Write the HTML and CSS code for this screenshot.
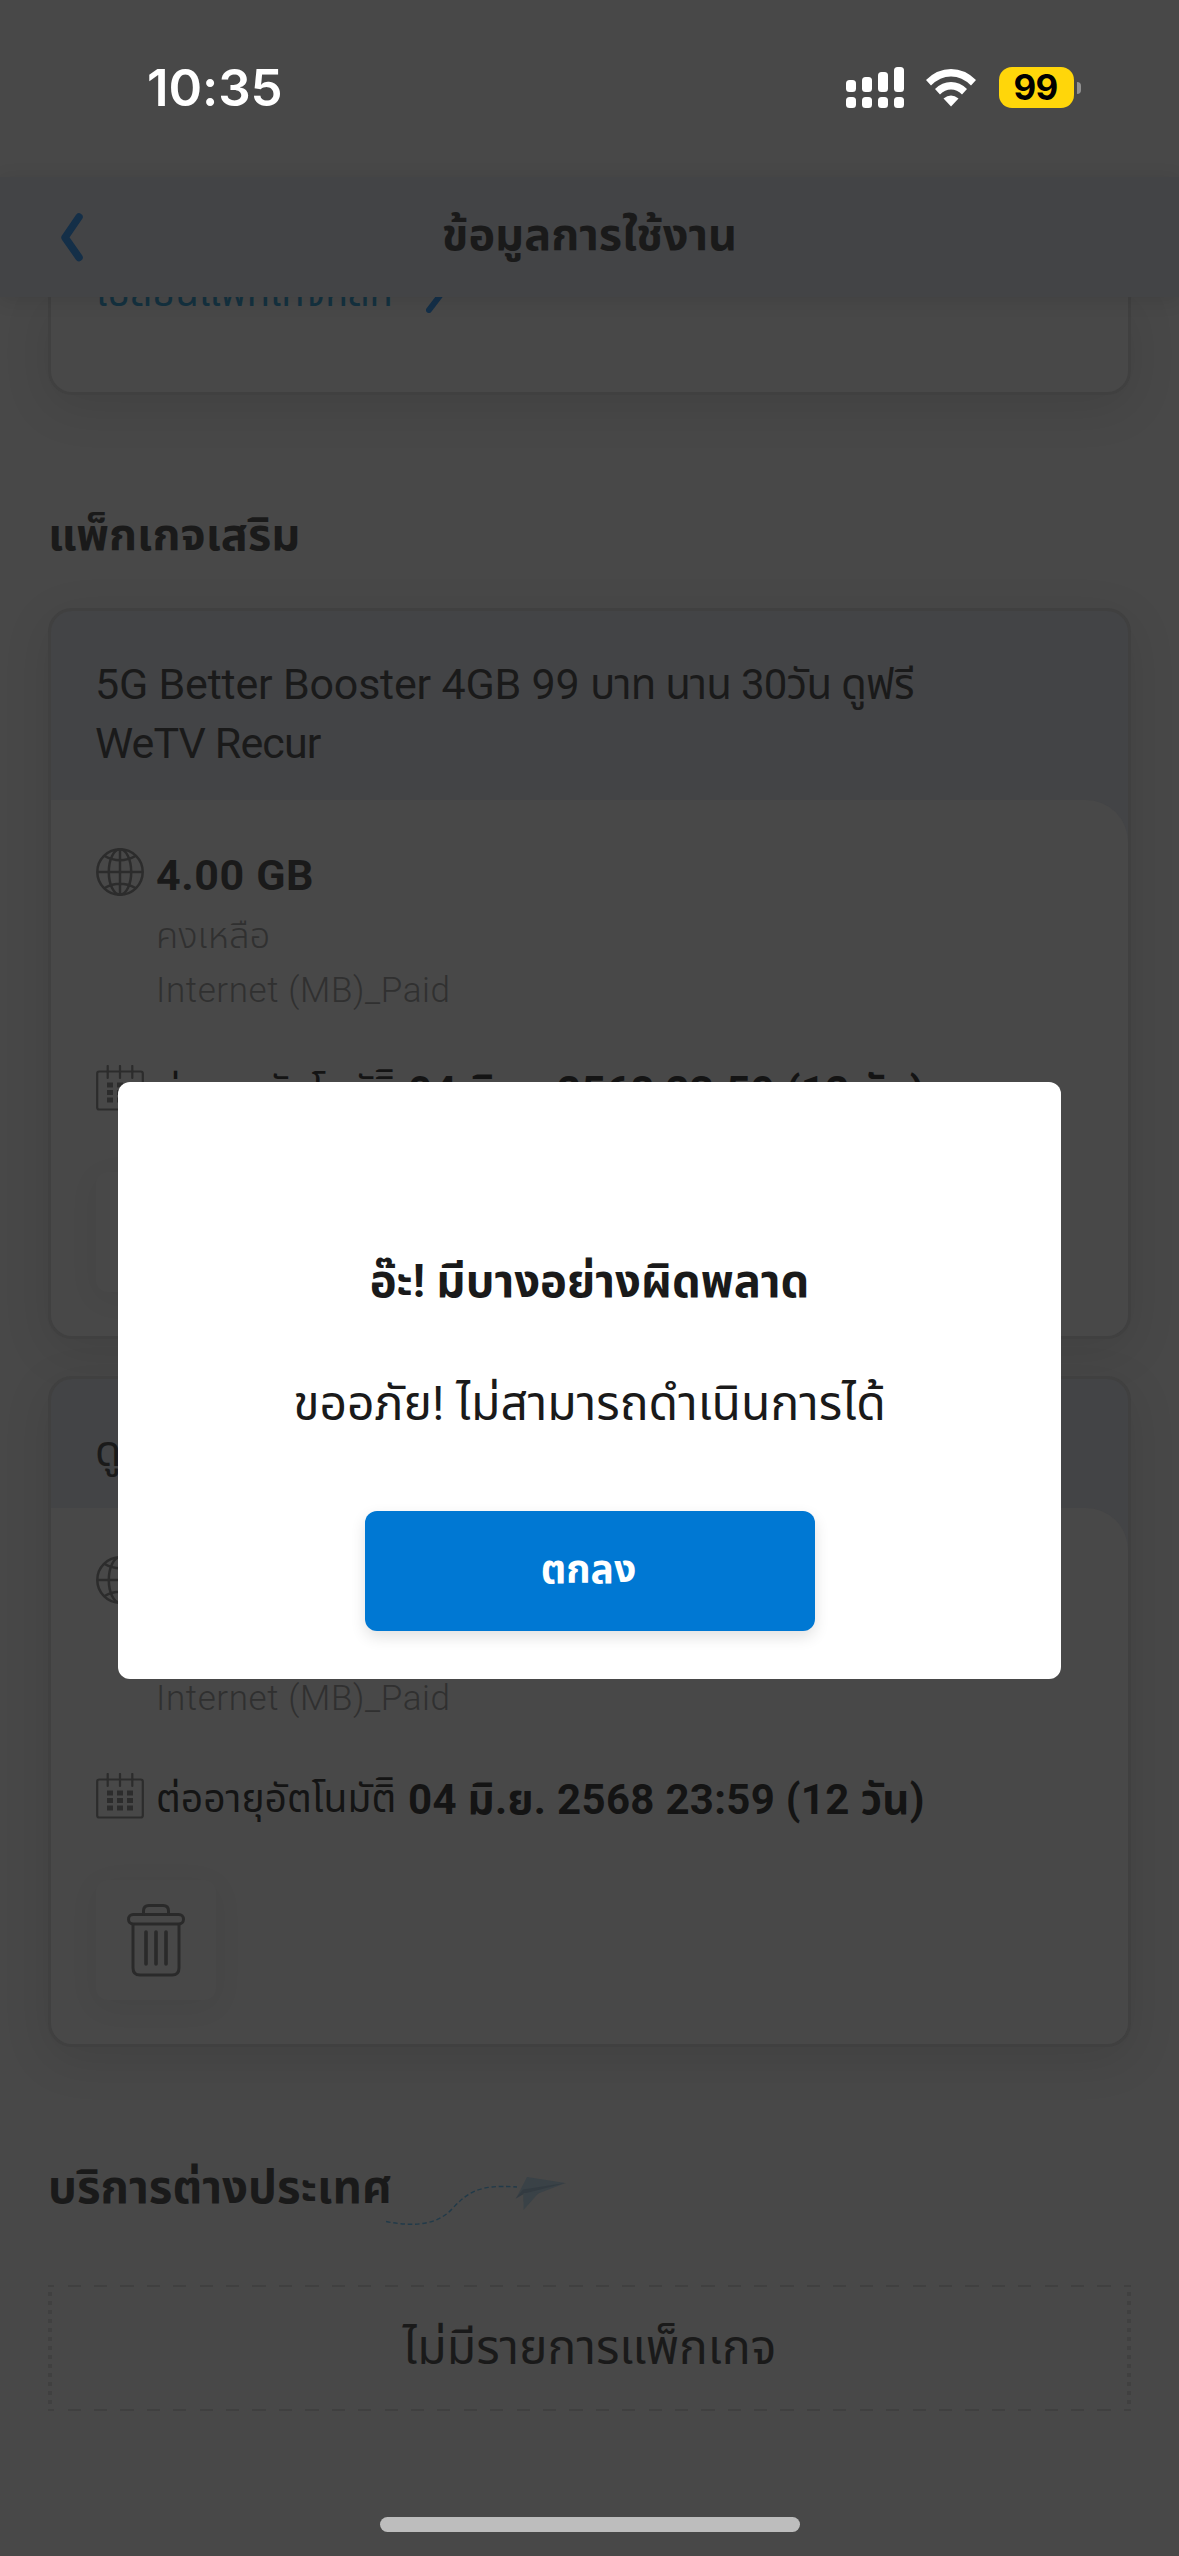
FILE: index.html
```
<!DOCTYPE html>
<html lang="th">
<head>
<meta charset="utf-8">
<title>ข้อมูลการใช้งาน</title>
<link rel="stylesheet" href="styles.css">
</head>
<body>
<svg class="defs" width="0" height="0">
  <symbol id="globe" viewBox="0 0 48 48"><g fill="none" stroke="currentColor" stroke-width="2.5"><circle cx="24" cy="24" r="22.7"/><ellipse cx="24" cy="24" rx="11.2" ry="22.7"/><path d="M24 1v46M1 24h46M8.500 8q15.500 8.500 31 0M8.500 40q15.500-8.500 31 0"/></g></symbol>
  <symbol id="calendar" viewBox="0 0 48 46"><g fill="none" stroke="currentColor" stroke-width="2.200"><rect x="1.200" y="6.500" width="45.600" height="38" rx="2"/><path d="M11.700 1v12M24 1v12M36.300 1v12" stroke-linecap="round"/></g><path d="M11 17.500h6v5h-6zM21 17.500h6v5h-6zM31 17.500h6v5h-6zM11 25h6v5h-6zM21 25h6v5h-6zM31 25h6v5h-6zM11 32.500h6v5h-6zM21 32.500h6v5h-6zM31 32.500h6v5h-6z" fill="currentColor"/></symbol>
  <symbol id="trash" viewBox="0 0 60 74"><g fill="none" stroke="currentColor" stroke-width="3" stroke-linecap="round"><rect x="2.500" y="11.500" width="55" height="9.500" rx="4.750"/><path d="M17.500 11V8q0-5.500 5.500-5.500h14q5.500 0 5.500 5.500v3M7 21.500V65q0 7 7 7h32q7 0 7-7V21.500"/><path d="M20 29v32M30 29v32M40 29v32" stroke-width="3.600"/></g></symbol>
</svg>
<div class="screen">
  <div class="status-bar">
    <span class="clock">10:35</span>
    <div class="status-icons">
      <svg class="signal" viewBox="0 0 58 41" fill="#fff"><rect x="0" y="13" width="10" height="12" rx="3.500"/><rect x="16" y="10" width="10" height="15" rx="3.500"/><rect x="32" y="5" width="10" height="20" rx="3.500"/><rect x="48" y="0" width="10" height="25" rx="3.500"/><rect x="0" y="30" width="10" height="11" rx="3.500"/><rect x="16" y="30" width="10" height="11" rx="3.500"/><rect x="32" y="30" width="10" height="11" rx="3.500"/><rect x="48" y="30" width="10" height="11" rx="3.500"/></svg>
      <svg class="wifi" viewBox="0 0 50 38" fill="#fff"><path d="M0 11Q11 0 25 0t25 11l-5 5.500Q36 7.500 25 7.500T5 16.500z"/><path d="M9 20q7-7 16-7t16 7l-5 5.500q-5-5-11-5t-11 5z"/><path d="M17.500 29.500q7.500-6 15 0L25 37.500z"/></svg>
      <div class="battery"><span class="battery-level">99</span><span class="battery-tip"></span></div>
    </div>
  </div>

  <header class="nav-bar">
    <svg class="back" viewBox="0 0 24 50" fill="none" stroke="#142f48" stroke-width="7.500" stroke-linecap="round" stroke-linejoin="round"><path d="M19 5 5 25.500l14 20"/></svg>
    <h1 class="nav-title">ข้อมูลการใช้งาน</h1>
  </header>

  <main class="content">
    <section class="main-package">
      <div class="change-link"><span class="change-label">เปลี่ยนแพ็กเกจหลัก</span>
        <svg class="next" viewBox="0 0 20 40" fill="none" stroke="#142f48" stroke-width="6" stroke-linecap="round" stroke-linejoin="round"><path d="M3 4l13 16L3 37"/></svg></div>
    </section>

    <h2 class="section-title addon-title"><span>แพ็กเกจเสริม</span></h2>

    <article class="card">
      <div class="card-head"><span class="pkg-one">5G Better Booster 4GB 99 </span><span class="pkg-thai">บาท นาน 30วัน ดูฟรี</span><br><span class="pkg-two">WeTV Recur</span></div>
      <div class="card-body">
        <div class="row">
          <svg class="globe"><use href="#globe"/></svg>
          <div><div class="quota">4.00 GB</div><div class="note left">คงเหลือ</div><div class="note type">Internet (MB)_Paid</div></div>
        </div>
        <div class="row renew">
          <svg class="calendar"><use href="#calendar"/></svg>
          <div class="date"><span class="auto">ต่ออายุอัตโนมัติิ</span><b>04 มิ.ย. 2568 23:59 (12 วัน)</b></div>
        </div>
        <div class="delete"><svg class="trash"><use href="#trash"/></svg></div>
      </div>
    </article>

    <article class="card second">
      <div class="card-head"><span>ดูฟรี WeTV Recur</span></div>
      <div class="card-body">
        <div class="row">
          <svg class="globe"><use href="#globe"/></svg>
          <div><div class="quota">4.00 GB</div><div class="note left">คงเหลือ</div><div class="note type">Internet (MB)_Paid</div></div>
        </div>
        <div class="row renew">
          <svg class="calendar"><use href="#calendar"/></svg>
          <div class="date"><span class="auto">ต่ออายุอัตโนมัติิ</span><b>04 มิ.ย. 2568 23:59 (12 วัน)</b></div>
        </div>
        <div class="delete"><svg class="trash"><use href="#trash"/></svg></div>
      </div>
    </article>

    <h2 class="section-title abroad-title"><span>บริการต่างประเทศ</span>
      <svg class="plane" viewBox="0 0 180 60"><path d="M0 52.500C28 58 51 56 66 40S92 15 131 18" fill="none" stroke="#213a49" stroke-width="1.400" stroke-dasharray="4.500 2.800"/><path d="M141 8l38.500 6-26 10-16 8.500v-7.500l-7.500 4.500z" fill="#3a4247"/><path d="M179.500 14L137 20.500l-7.500 9 9-5z" fill="#333b41"/><path d="M137.500 24l16-1-16 18z" fill="#3a4247"/></svg>
    </h2>
    <div class="empty"><span>ไม่มีรายการแพ็กเกจ</span></div>
  </main>
  <div class="home-indicator"></div>

  <div class="overlay">
    <div class="modal">
      <div class="modal-title"><span>อ๊ะ! มีบางอย่างผิดพลาด</span></div>
      <div class="modal-text"><span>ขออภัย! ไม่สามารถดำเนินการได้</span></div>
      <button class="confirm"><span>ตกลง</span></button>
    </div>
  </div>
</div>
</body>
</html>
```
FILE: styles.css
```
* { box-sizing: border-box; }
body { margin: 0; background: #484848; }
h1, h2 { margin: 0; font-weight: 700; }
svg { display: block; flex: none; }
.defs { position: absolute; }
.screen {
  position: relative;
  display: flex;
  flex-direction: column;
  width: 1179px;
  height: 2556px;
  overflow: hidden;
  background: #484848;
  color: #1a1a1a;
  font-family: Roboto, "Noto Sans Thai", "Noto Sans", sans-serif;
  white-space: nowrap;
}

.status-bar {
  display: flex;
  justify-content: space-between;
  height: 177px;
  padding: 57px 98px 0 147px;
  color: #fff;
  font-family: Inter, sans-serif;
}
.clock { font-size: 51px; font-weight: 600; line-height: 62px; letter-spacing: -0.1px; }
.status-icons { display: flex; align-items: flex-start; padding-top: 10px; }
.signal { width: 58px; height: 41px; }
.wifi { width: 50px; height: 38px; margin: 2px 23px 0 22px; }
.battery { display: flex; align-items: center; gap: 3px; }
.battery-level {
  width: 75px;
  height: 41px;
  padding-right: 2px;
  border-radius: 13px;
  background: #ffd60a;
  color: #000;
  font-size: 35px;
  font-weight: 700;
  line-height: 41px;
  letter-spacing: -0.8px;
  text-align: center;
}
.battery-tip { width: 4px; height: 12px; border-radius: 0 4px 4px 0; background: #929292; }

.nav-bar {
  position: relative;
  z-index: 1;
  display: flex;
  align-items: center;
  flex: none;
  height: 120px;
  padding: 0 60px;
  background: #434446;
  box-shadow: 0 3px 18px rgba(0, 0, 0, 0.1);
}
.back { width: 24px; height: 50px; }
.nav-title { flex: 1; margin: -5px 24px 0 0; font-size: 45px; line-height: 60px; text-align: center; }

.content { display: flex; flex-direction: column; padding: 0 48px; }
.main-package {
  height: 98px;
  border: 3px solid #404040;
  border-top: 0;
  border-radius: 0 0 24px 24px;
  padding-left: 45px;
  box-shadow: 0 12px 48px rgba(0, 0, 0, 0.1);
}
.change-link { display: flex; align-items: center; margin-top: -31px; height: 54px; color: #14313f; }
.change-label { width: 296px; font-size: 38.6px; line-height: 54px; }
.next { width: 20px; height: 40px; margin-left: 34px; }

.section-title { display: flex; font-size: 45px; line-height: 57px; height: 60px; }
.addon-title { margin: 111px 0 42px; }

.card {
  border: 3px solid #404040;
  border-radius: 24px;
  background: #434446;
  box-shadow: 0 12px 48px rgba(0, 0, 0, 0.1);
}
.second { margin-top: 37px; }
.card-head { padding: 43.5px 45px 27px 44px; font-size: 43px; line-height: 59px; letter-spacing: -0.7px; }
.pkg-one { letter-spacing: -0.2px; }
.pkg-thai { font-size: 42px; letter-spacing: -0.8px; }
.pkg-two { letter-spacing: -0.9px; }
.card-body { height: 536px; padding: 45px 45px 0; border-radius: 0 42px 21px 21px; background: #484848; }
.row { display: flex; gap: 12px; }
.globe { width: 48px; height: 48px; margin-top: 3px; color: #2c2c2c; }
.calendar { width: 48px; height: 46px; margin-top: 4px; color: #2c2c2c; }
.quota { margin-bottom: 4px; font-size: 43px; font-weight: 700; line-height: 60px; letter-spacing: 0.6px; }
.note { color: #303030; font-size: 36.5px; font-weight: 300; line-height: 54px; }
.type { font-size: 35px; line-height: 56px; margin-bottom: -2px; letter-spacing: 0.6px; }
.renew { margin-top: 44px; }
.date { font-size: 42px; line-height: 61px; color: #141414; display: flex; }
.date b { letter-spacing: 0.3px; }
.auto { width: 252px; font-size: 39px; }
.delete {
  display: flex;
  justify-content: center;
  width: 120px;
  height: 120px;
  margin-top: 50px;
  padding-top: 23px;
  border-radius: 12px;
  box-shadow: 0 6px 30px rgba(0, 0, 0, 0.06);
}
.trash { width: 60px; height: 74px; color: #2a2a2a; }

.abroad-title { margin: 112px 0 66px; font-size: 45.6px; }
.abroad-title span { width: 338px; }
.plane { width: 180px; height: 60px; margin-top: 10px; }
.empty {
  height: 126px;
  background:
    repeating-linear-gradient(90deg, #404040 0 6.500px, transparent 6.500px 19.700px, #404040 19.700px 26.400px) 0 0 / 100% 2px no-repeat,
    repeating-linear-gradient(90deg, #404040 0 6.500px, transparent 6.500px 19.700px, #404040 19.700px 26.400px) 0 100% / 100% 2px no-repeat,
    repeating-linear-gradient(180deg, #404040 0 2px, transparent 2px 7px, #404040 7px 9px) 0 0 / 4px 100% no-repeat,
    repeating-linear-gradient(180deg, #404040 0 2px, transparent 2px 7px, #404040 7px 9px) 100% 0 / 4px 100% no-repeat;
  font-size: 48px;
  font-weight: 400;
  line-height: 126px;
  text-align: center;
}

.home-indicator { width: 420px; height: 15px; margin: 106px auto 0; border-radius: 8px; background: #bdbdbd; }

.overlay { position: absolute; inset: 0; z-index: 2; padding: 1082px 118px 0; }
.modal {
  display: flex;
  flex-direction: column;
  align-items: center;
  height: 597px;
  padding-top: 170px;
  border-radius: 12px;
  background: #fff;
}
.modal-title { font-size: 45.4px; font-weight: 700; line-height: 60px; }
.modal-text { margin-top: 62px; font-size: 48px; font-weight: 400; line-height: 60px; }
.confirm {
  width: 450px;
  height: 120px;
  margin-top: 77px;
  padding: 0 2px 2px 0;
  border: 0;
  border-radius: 12px;
  background: #0078d3;
  color: #fff;
  font: 700 39px/118px Roboto, "Noto Sans Thai", sans-serif;
  box-shadow: 0 6px 15px rgba(0, 0, 0, 0.12);
}
```
